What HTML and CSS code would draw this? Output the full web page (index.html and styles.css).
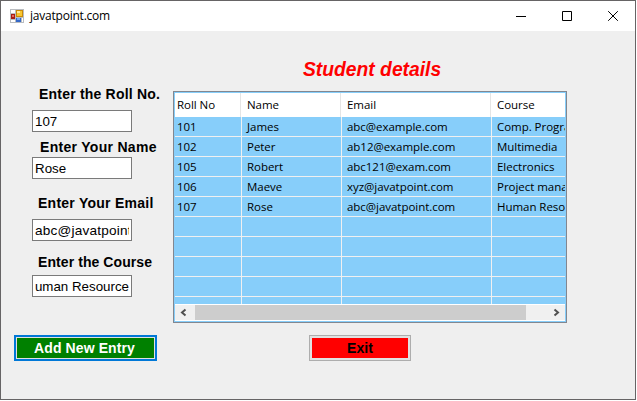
FILE: index.html
```html
<!DOCTYPE html>
<html lang="en">
<head>
<meta charset="utf-8">
<title>javatpoint.com</title>
<link rel="stylesheet" href="styles.css">
</head>
<body>
<div class="window">
  <header class="titlebar">
    <svg class="app-icon" width="14" height="14" viewBox="0 0 14 14" shape-rendering="crispEdges">
      <path fill="#b9bcc0" d="M0 0h14v14H0z"/>
      <path fill="#fff" d="M1 1h4v3H1zM1 11h4v2H1zM12 9h1v4h-1z"/>
      <path fill="#a81c14" d="M1 5h4v5H1z"/>
      <path fill="#e8685c" d="M2 6h2v2H2z"/>
      <path fill="#c98a08" d="M6 1h7v7H6z"/>
      <path fill="#f8c630" d="M7 2h5v5H7z"/>
      <path fill="#ffe898" d="M7 2h3v2H7z"/>
      <path fill="#3468c8" d="M6 9h5v4H6z"/>
      <path fill="#78a8f0" d="M7 9h3v2H7z"/>
    </svg>
    <span class="title">javatpoint.com</span>
    <div class="controls">
      <svg width="10" height="10"><path d="M0 5.5h10"/></svg>
      <svg width="10" height="10"><path d="M.5.5h9v9h-9z"/></svg>
      <svg width="10" height="10"><path d="M.2.2l9.6 9.6M9.8.2L.2 9.8"/></svg>
    </div>
  </header>
  <main class="content">
    <form class="fields">
      <label class="roll">Enter the Roll No.</label>
      <div class="input">107</div>
      <label class="name">Enter Your Name</label>
      <div class="input">Rose</div>
      <label class="email">Enter Your Email</label>
      <div class="input wide">abc@javatpoint.com</div>
      <label class="course">Enter the Course</label>
      <div class="input scrolled"><span>Human Resource</span></div>
      <button type="button" class="add">Add New Entry</button>
    </form>
    <section class="details">
      <h1>Student details</h1>
      <div class="list">
        <div class="row head"><span>Roll No</span><span>Name</span><span>Email</span><span>Course</span></div>
        <div class="rows">
          <div class="row"><span>101</span><span>James</span><span>abc@example.com</span><span>Comp. Programming</span></div>
          <div class="row"><span>102</span><span>Peter</span><span>ab12@example.com</span><span>Multimedia</span></div>
          <div class="row"><span>105</span><span>Robert</span><span>abc121@exam.com</span><span>Electronics</span></div>
          <div class="row"><span>106</span><span>Maeve</span><span>xyz@javatpoint.com</span><span>Project management</span></div>
          <div class="row"><span>107</span><span>Rose</span><span>abc@javatpoint.com</span><span>Human Resource</span></div>
          <div class="row"><span></span><span></span><span></span><span></span></div>
          <div class="row"><span></span><span></span><span></span><span></span></div>
          <div class="row"><span></span><span></span><span></span><span></span></div>
          <div class="row"><span></span><span></span><span></span><span></span></div>
          <div class="row"><span></span><span></span><span></span><span></span></div>
        </div>
        <div class="scrollbar">
          <svg width="20" height="15"><path d="M10.5 4.5L7 7.5l3.5 3"/></svg>
          <div class="thumb"></div>
          <svg width="17" height="15"><path d="M6.5 4.5l3.5 3-3.5 3"/></svg>
        </div>
      </div>
      <button type="button" class="exit">Exit</button>
    </section>
  </main>
</div>
</body>
</html>
```

FILE: styles.css
```css
* { box-sizing: border-box; }
body { margin: 0; background: #fff; overflow: hidden; }
.window {
  width: 636px;
  height: 400px;
  border: 1px solid #666465;
  background: #efefef;
  font-family: "Liberation Sans", Arial, sans-serif;
  color: #000;
}
.titlebar {
  display: flex;
  align-items: center;
  height: 30px;
  padding: 0 17px 0 9px;
  background: #fff;
}
.title {
  margin-left: 6px;
  font: 12px/16px "Open Sans", sans-serif;
  letter-spacing: -0.22px;
}
.controls { display: flex; gap: 36px; margin-left: auto; }
.controls svg { fill: none; stroke: #000; stroke-width: 1; }
.content { display: flex; height: 368px; }
.fields {
  display: flex;
  flex-direction: column;
  align-items: flex-start;
  width: 172px;
  padding: 56px 0 0 31px;
}
label {
  height: 16px;
  font-size: 14px;
  font-weight: bold;
  line-height: 14px;
  white-space: nowrap;
  letter-spacing: 0.2px;
}
.roll { margin: 0 0 7px 7px; }
.name { margin: 8px 0 1px 8px; letter-spacing: 0.3px; }
.email { margin: 17px 0 7px 6px; letter-spacing: 0.25px; }
.course { margin: 14px 0 4px 6px; letter-spacing: 0.08px; }
.input {
  width: 100px;
  height: 22px;
  padding: 0 2px;
  border: 1px solid #7a7a7a;
  background: #fff;
  font-size: 13.33px;
  line-height: 21px;
  white-space: nowrap;
  overflow: clip;
  overflow-clip-margin: content-box;
}
.wide { font-size: 13.6px; letter-spacing: 0.2px; }
.scrolled { display: flex; justify-content: flex-end; }
button {
  display: block;
  height: 26px;
  padding: 0;
  border-radius: 0;
  font: bold 14px/22px "Liberation Sans", Arial, sans-serif;
  letter-spacing: 0.1px;
}
.add {
  width: 143px;
  margin: 38px 0 0 -18px;
  padding-right: 2px;
  border: 2px solid #0078d7;
  background: #008000;
  box-shadow: inset 0 0 0 1px #e1e1e1;
  color: #fff;
}
.exit {
  width: 102px;
  margin: 12px 0 0 136px;
  border: 1px solid #adadad;
  background: #f00;
  box-shadow: inset 0 0 0 2px #e1e1e1;
  color: #000;
}
.details { width: 394px; padding-top: 27px; }
h1 {
  height: 24px;
  margin: 0 0 9px 130px;
  font-size: 19.3px;
  font-style: italic;
  line-height: 24px;
  color: #f00;
  white-space: nowrap;
}
.list {
  display: flex;
  flex-direction: column;
  height: 232px;
  border: 1px solid #828790;
  background: #87cefa;
  padding: 1px;
  font: 11.5px/19px "Open Sans", sans-serif;
  letter-spacing: -0.04px;
}
.row {
  display: grid;
  grid-template-columns: 67px 100px 150px 73px;
  height: 20px;
  border-bottom: 1px solid #f0f0f0;
}
.row span {
  padding-left: 5px;
  border-right: 1px solid #f0f0f0;
  white-space: nowrap;
  overflow: hidden;
}
.row span:first-child { padding-left: 2px; }
.row span:last-child { border-right: 0; }
.head {
  grid-template-columns: 66px 100px 150px 74px;
  height: 24px;
  border: 0;
  background: #fff;
  line-height: 24px;
}
.head span { padding-left: 6px; border-color: #e5e5e5; }
.rows { height: 187px; overflow: hidden; }
.scrollbar {
  display: flex;
  height: 17px;
  border: solid #fff;
  border-width: 1px 0;
  background: #f0f0f0;
}
.scrollbar svg { fill: none; stroke: #505050; stroke-width: 2; }
.thumb { width: 331px; margin-right: 22px; background: #cdcdcd; }
```
